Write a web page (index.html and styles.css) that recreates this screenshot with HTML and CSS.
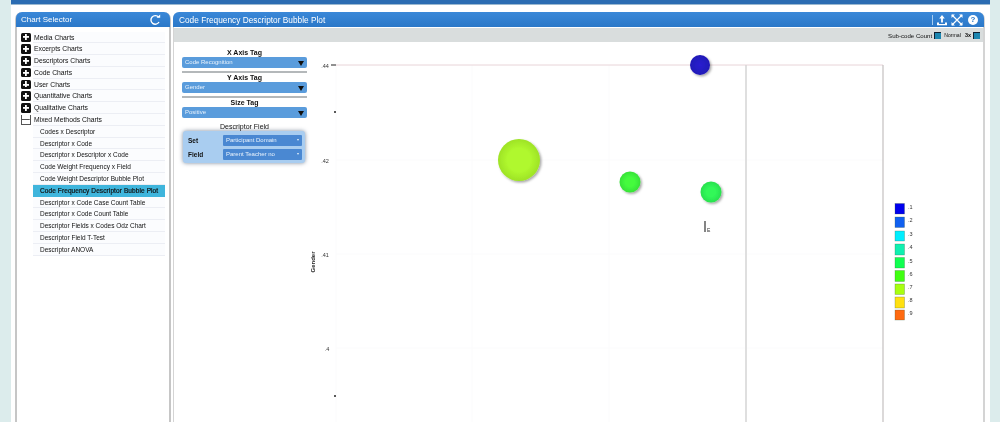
FILE: index.html
```html
<!DOCTYPE html>
<html lang="en">
<head>
    <meta charset="UTF-8">
    <title>Code Frequency Descriptor Bubble Plot</title>
    <link rel="stylesheet" href="styles.css">
</head>
<body>
    <div class="app">
        <div class="top-bar"></div>
        <div class="panels">

            <!-- Chart selector -->
            <div class="panel selector">
                <div class="panel-header">
                    <span class="panel-title">Chart Selector</span>
                    <svg class="refresh-icon" width="12" height="12" viewBox="0 0 12 12">
                        <path d="M9.6 3.2A4.3 4.3 0 1 0 10 8" fill="none" stroke="#fff" stroke-width="1.4"/>
                        <path d="M7.6 3.8h3.6V0.4z" fill="#fff"/>
                    </svg>
                </div>
                <div class="chart-list">
                    <div class="cat-row"><span class="box-icon"></span>Media Charts</div>
                    <div class="cat-row"><span class="box-icon"></span>Excerpts Charts</div>
                    <div class="cat-row"><span class="box-icon"></span>Descriptors Charts</div>
                    <div class="cat-row"><span class="box-icon"></span>Code Charts</div>
                    <div class="cat-row"><span class="box-icon"></span>User Charts</div>
                    <div class="cat-row"><span class="box-icon"></span>Quantitative Charts</div>
                    <div class="cat-row"><span class="box-icon"></span>Qualitative Charts</div>
                    <div class="cat-row"><span class="box-icon open"></span>Mixed Methods Charts</div>
                    <div class="sub-row">Codes x Descriptor</div>
                    <div class="sub-row">Descriptor x Code</div>
                    <div class="sub-row">Descriptor x Descriptor x Code</div>
                    <div class="sub-row">Code Weight Frequency x Field</div>
                    <div class="sub-row">Code Weight Descriptor Bubble Plot</div>
                    <div class="sub-row selected">Code Frequency Descriptor Bubble Plot</div>
                    <div class="sub-row">Descriptor x Code Case Count Table</div>
                    <div class="sub-row">Descriptor x Code Count Table</div>
                    <div class="sub-row">Descriptor Fields x Codes Odz Chart</div>
                    <div class="sub-row">Descriptor Field T-Test</div>
                    <div class="sub-row">Descriptor ANOVA</div>
                </div>
            </div>

            <!-- Plot panel -->
            <div class="panel plot-panel">
                <div class="panel-header">
                    <span class="panel-title plot-title">Code Frequency Descriptor Bubble Plot</span>
                    <div class="header-tools">
                        <span class="tool-sep"></span>
                        <svg width="12" height="12" viewBox="0 0 12 12">
                            <path d="M6 1 3.2 4.4h1.9v4h1.8v-4h1.9z M1 8.4h2v1.5h6V8.4h2V11.2H1z" fill="#fff"/>
                        </svg>
                        <svg width="12" height="12" viewBox="0 0 12 12">
                            <path d="M1 1l10 10M11 1 1 11" stroke="#fff" stroke-width="1.2"/>
                            <path d="M0.5 0.5h3.4L0.5 3.9z M11.5 0.5v3.4L8.1 0.5z M0.5 11.5v-3.4l3.4 3.4z M11.5 11.5H8.1l3.4-3.4z" fill="#fff"/>
                        </svg>
                        <span class="help-icon">?</span>
                    </div>
                </div>
                <div class="plot-toolbar">
                    <span>Sub-code Count</span><span class="toggle"></span>
                    <span class="normal-label">Normal</span><b>3x</b><span class="toggle"></span>
                </div>
                <div class="plot-body">
                    <div class="controls">
                        <div class="control-label">X Axis Tag</div>
                        <div class="tag-select">Code Recognition<i class="arrow"></i></div>
                        <div class="control-sep"></div>
                        <div class="control-label">Y Axis Tag</div>
                        <div class="tag-select">Gender<i class="arrow"></i></div>
                        <div class="control-sep"></div>
                        <div class="control-label">Size Tag</div>
                        <div class="tag-select">Positive<i class="arrow"></i></div>
                        <div class="control-label field-label">Descriptor Field</div>
                        <div class="field-box">
                            <div class="field-row"><b>Set</b><div class="field-select">Participant Domain<i class="arrow small"></i></div></div>
                            <div class="field-row"><b>Field</b><div class="field-select">Parent Teacher no<i class="arrow small"></i></div></div>
                        </div>
                    </div>

                    <!-- viewBox uses page coordinates so points read straight off the screenshot -->
                    <svg class="chart" viewBox="310 42 675 380">
                        <defs>
                            <radialGradient id="blue-ball" cx="50%" cy="50%" r="55%">
                                <stop offset="0" stop-color="#2a1fd0"/><stop offset="1" stop-color="#1e18b4"/>
                            </radialGradient>
                            <radialGradient id="lime-ball" cx="50%" cy="50%" r="55%">
                                <stop offset="0.5" stop-color="#b0f82e"/><stop offset="1" stop-color="#9ade24"/>
                            </radialGradient>
                            <radialGradient id="green-ball" cx="50%" cy="50%" r="55%">
                                <stop offset="0.4" stop-color="#44fb3e"/><stop offset="1" stop-color="#34dd36"/>
                            </radialGradient>
                            <radialGradient id="mint-ball" cx="50%" cy="50%" r="55%">
                                <stop offset="0.4" stop-color="#30f858"/><stop offset="1" stop-color="#28dc4c"/>
                            </radialGradient>
                            <filter id="ball-shadow" x="-30%" y="-30%" width="170%" height="170%">
                                <feDropShadow dx="1.5" dy="1.5" stdDeviation="1.3" flood-color="#000" flood-opacity="0.35"/>
                            </filter>
                        </defs>

                        <!-- faint grid -->
                        <g stroke="#fbfbfc" stroke-width="1">
                            <path d="M336 65V422M472 65V422M609 65V422"/>
                            <path d="M336 160H883M336 254H883M336 348H883"/>
                        </g>
                        <path d="M336 65H883" stroke="#e8d4d8" stroke-width="1"/>
                        <path d="M746 65V422" stroke="#d4d4d4" stroke-width="1.5"/>
                        <path d="M883 65V422" stroke="#c4c0c0" stroke-width="1.2"/>

                        <!-- y axis -->
                        <path d="M331 65H336" stroke="#222" stroke-width="1"/>
                        <g fill="#222">
                            <circle cx="335" cy="112" r="1"/>
                            <circle cx="335" cy="396" r="1"/>
                        </g>
                        <g class="axis-text">
                            <text x="325" y="67.5" text-anchor="middle">.44</text>
                            <text x="325" y="162.5" text-anchor="middle">.42</text>
                            <text x="325" y="256.5" text-anchor="middle">.41</text>
                            <text x="327" y="351" text-anchor="middle">.4</text>
                        </g>
                        <text class="axis-title" transform="translate(315 262) rotate(-90)" text-anchor="middle">Gender</text>

                        <!-- bubbles -->
                        <g filter="url(#ball-shadow)">
                            <circle cx="700" cy="65" r="10" fill="url(#blue-ball)"/>
                            <circle cx="519" cy="160" r="21" fill="url(#lime-ball)"/>
                            <circle cx="630" cy="182" r="10.5" fill="url(#green-ball)"/>
                            <circle cx="711" cy="192" r="10.5" fill="url(#mint-ball)"/>
                        </g>

                        <!-- mouse cursor caught in the capture -->
                        <path d="M705 221V232" stroke="#333" stroke-width="1.2"/>
                        <text class="cursor-text" x="707" y="232">E</text>

                        <!-- legend -->
                        <g stroke="#3a5a3a" stroke-opacity="0.45" stroke-width="0.6">
                            <rect x="895" y="203.5" width="9.5" height="10.5" fill="#0000ee"/>
                            <rect x="895" y="217" width="9.5" height="10.5" fill="#1060f0"/>
                            <rect x="895" y="231" width="9.5" height="10" fill="#00eeff"/>
                            <rect x="895" y="244" width="9.5" height="11" fill="#10f0b0"/>
                            <rect x="895" y="257.500" width="9.5" height="10.5" fill="#10ff50"/>
                            <rect x="895" y="270.500" width="9.5" height="11" fill="#40ff10"/>
                            <rect x="895" y="284" width="9.5" height="10.5" fill="#a8ff10"/>
                            <rect x="895" y="297" width="9.5" height="11" fill="#ffe010"/>
                            <rect x="895" y="310" width="9.5" height="10" fill="#ff6a10"/>
                        </g>
                        <g class="legend-text">
                            <text x="908" y="208.500">.1</text>
                            <text x="908" y="222">.2</text>
                            <text x="908" y="235.500">.3</text>
                            <text x="908" y="249">.4</text>
                            <text x="908" y="262.500">.5</text>
                            <text x="908" y="275.500">.6</text>
                            <text x="908" y="289">.7</text>
                            <text x="908" y="302">.8</text>
                            <text x="908" y="315">.9</text>
                        </g>
                    </svg>
                </div>
            </div>
        </div>
    </div>
</body>
</html>
```

FILE: styles.css
```css
html, body {
    margin: 0;
    height: 100%;
    overflow: hidden;
}

body {
    font-family: "Liberation Sans", Arial, sans-serif;
    background-color: #dcecec;
}

/* The reference is a soft video frame, so the whole page gets a slight blur */
.app {
    margin: 0 10px 0 11px;
    height: 422px;
    background-color: #fff;
    filter: blur(0.5px);
}

.top-bar {
    height: 4px;
    background-color: #2b6cb2;
    border-bottom: 1px solid #9ab8d0;
}

.panels {
    display: flex;
    gap: 2px;
    height: 417px;
    padding: 7px 5px 0 4px;
    box-sizing: border-box;
}

.panel {
    display: flex;
    flex-direction: column;
    box-sizing: border-box;
    border-left: 2px solid #c6c6c6;
    border-right: 2px solid #c6c6c6;
    border-radius: 7px 7px 0 0;
}

.selector {
    width: 156px;
    flex-shrink: 0;
}

.plot-panel {
    flex: 1;
    min-width: 0;
    border-left-width: 1px;
    border-color: #d4d4d4;
}

.panel-header {
    display: flex;
    align-items: center;
    justify-content: space-between;
    height: 15px;
    margin: 0 -1px;
    padding: 0 5px;
    background: linear-gradient(#3a88d8, #2b78c8);
    border-radius: 6px 6px 0 0;
    color: #fff;
}

.panel-title {
    font-size: 8px;
}

.plot-title {
    font-size: 8.3px;
    margin-left: 1px;
}

.refresh-icon {
    margin-right: 4px;
}

/* Chart list */
.chart-list {
    padding-top: 4.5px;
    font-size: 6.8px;
    color: #111;
}

.cat-row,
.sub-row {
    box-sizing: border-box;
    height: 11.8px;
    line-height: 11px;
    border-bottom: 1px solid #eceef4;
    background-color: #fbfcfe;
    white-space: nowrap;
}

.cat-row {
    position: relative;
    margin: 0 4px 0 16px;
    padding-left: 1px;
}

.sub-row {
    margin: 0 4px 0 16px;
    padding-left: 7px;
    font-size: 6.5px;
}

.sub-row.selected {
    background-color: #3fb5dc;
    border-bottom-color: #3fb5dc;
    letter-spacing: 0.1px;
    -webkit-text-stroke: 0.2px #111;
}

/* plus / minus box, hangs left of its row */
.box-icon {
    position: absolute;
    left: -12px;
    top: 1px;
    width: 9.5px;
    height: 9.5px;
    border-radius: 1.5px;
    background:
        linear-gradient(#fff, #fff) center / 6px 1.8px no-repeat,
        linear-gradient(#fff, #fff) center / 1.8px 6px no-repeat,
        #111;
}

.box-icon.open {
    background: linear-gradient(#555, #555) center / 100% 1px no-repeat, #fff;
    border-left: 1px solid #555;
    border-right: 1px solid #555;
    border-bottom: 1px solid #555;
    border-radius: 0;
    box-sizing: border-box;
}

/* Plot panel */
.header-tools {
    display: flex;
    align-items: center;
    gap: 3px;
    margin-right: 1px;
}

.tool-sep {
    width: 1px;
    height: 10px;
    background-color: #a8cdf0;
}

.help-icon {
    display: block;
    width: 10px;
    height: 10px;
    margin-left: 2px;
    border-radius: 50%;
    background-color: #fff;
    color: #2b78c8;
    font-size: 8px;
    font-weight: bold;
    line-height: 10px;
    text-align: center;
}

.plot-toolbar {
    display: flex;
    align-items: center;
    justify-content: flex-end;
    gap: 2px;
    height: 14px;
    margin-top: 1px;
    padding-right: 3px;
    background-color: #d9dddd;
    font-size: 6.1px;
    color: #111;
}

.plot-toolbar b {
    margin: 0 0 0 2px;
    font-size: 5.5px;
}

.normal-label {
    margin-left: 1px;
    font-size: 5.2px;
}

.toggle {
    width: 6px;
    height: 6px;
    background-color: #1c86b0;
    border-top: 1px solid #123;
    border-left: 1px solid #123;
}

.plot-body {
    display: flex;
    flex: 1;
    min-height: 0;
    overflow: hidden;
}

.controls {
    flex-shrink: 0;
    width: 125px;
    margin: 0 3px 0 8px;
    padding-top: 7px;
}

.control-label {
    height: 8px;
    font-size: 7px;
    font-weight: bold;
    line-height: 8px;
    text-align: center;
    color: #111;
}

.field-label {
    margin-top: 5px;
    font-weight: normal;
}

.tag-select {
    position: relative;
    height: 11px;
    padding-left: 3px;
    border-radius: 2px;
    background-color: #5a9cdc;
    color: #e8f2fc;
    font-size: 6px;
    line-height: 11px;
}

.control-sep {
    height: 2px;
    margin: 3px 0 1px 0;
    background-color: #b4b8ba;
}

.arrow {
    position: absolute;
    right: 3px;
    top: 3.5px;
    border-left: 3.5px solid transparent;
    border-right: 3.5px solid transparent;
    border-top: 5px solid #111;
}

.arrow.small {
    top: 4px;
    border-left-width: 1.5px;
    border-right-width: 1.5px;
    border-top: 2.5px solid #e8f2fc;
}

.field-box {
    display: flex;
    flex-direction: column;
    gap: 3px;
    width: 114px;
    margin: 0 0 0 1px;
    padding: 3.5px 3px 3.5px 5px;
    border-radius: 3px;
    background-color: #a9cdf0;
    box-shadow: 0 0 4px rgba(40, 60, 90, 0.6);
    font-size: 6.5px;
}

.field-row {
    display: flex;
    align-items: center;
    justify-content: space-between;
    color: #111;
}

.field-select {
    position: relative;
    box-sizing: border-box;
    width: 79px;
    height: 11px;
    padding-left: 3px;
    border-radius: 1px;
    background-color: #4a88d2;
    color: #e8f2fc;
    font-size: 6px;
    line-height: 11px;
}

.chart {
    display: block;
    flex-shrink: 0;
    width: 675px;
    height: 380px;
}

.axis-text,
.legend-text {
    font-size: 5.5px;
    fill: #333;
}

.axis-title {
    font-size: 6px;
    font-weight: bold;
    fill: #222;
}

.cursor-text {
    font-size: 5px;
    fill: #333;
}
```
